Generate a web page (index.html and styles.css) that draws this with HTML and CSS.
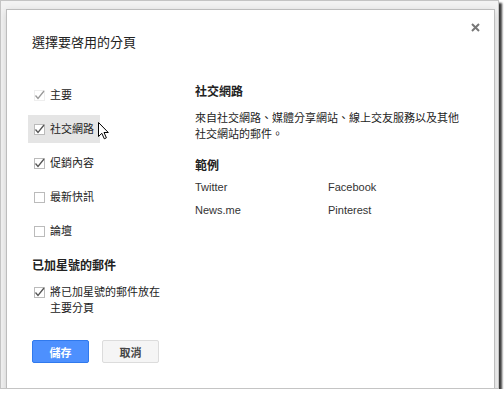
FILE: index.html
```html
<!DOCTYPE html>
<html lang="zh-Hant">
<head>
    <meta charset="UTF-8">
    <title>選擇要啓用的分頁</title>
    <link rel="stylesheet" href="styles.css">
</head>
<body>
    <div class="frame">
        <div class="dialog">
            <span class="close">
                <svg width="9" height="9" viewBox="0 0 9 9"><path d="M1 1 L8 8 M8 1 L1 8" stroke="#777" stroke-width="2"/></svg>
            </span>
            <h1 class="title">選擇要啓用的分頁</h1>

            <div class="body">
                <div class="tabs">
                    <div class="tab-list">
                        <label class="tab">
                            <svg class="cb" width="11" height="12" viewBox="0 0 11 12"><rect x="0.5" y="1.5" width="10" height="10" fill="#fff" stroke="#eee"/><path d="M1.5 6.5 L4 9.5 L10 2" fill="none" stroke="#999" stroke-width="1.3"/></svg>
                            主要
                        </label>
                        <label class="tab hover">
                            <svg class="cb" width="11" height="12" viewBox="0 0 11 12"><rect x="0.5" y="1.5" width="10" height="10" fill="#fff" stroke="#bbb"/><path d="M1.5 6.5 L4 9.5 L10 2" fill="none" stroke="#555" stroke-width="1.3"/></svg>
                            社交網路
                            <svg class="cursor" width="11" height="18" viewBox="0 0 11 18"><path d="M0.5 0.5 L0.5 14.5 L3.8 11.3 L6.3 16.8 L8.4 15.8 L6 10.5 L10.3 10.5 Z" fill="#fff" stroke="#000" stroke-width="1"/></svg>
                        </label>
                        <label class="tab">
                            <svg class="cb" width="11" height="12" viewBox="0 0 11 12"><rect x="0.5" y="1.5" width="10" height="10" fill="#fff" stroke="#bbb"/><path d="M1.5 6.5 L4 9.5 L10 2" fill="none" stroke="#555" stroke-width="1.3"/></svg>
                            促銷內容
                        </label>
                        <label class="tab">
                            <svg class="cb" width="11" height="12" viewBox="0 0 11 12"><rect x="0.5" y="1.5" width="10" height="10" fill="#fff" stroke="#bbb"/></svg>
                            最新快訊
                        </label>
                        <label class="tab">
                            <svg class="cb" width="11" height="12" viewBox="0 0 11 12"><rect x="0.5" y="1.5" width="10" height="10" fill="#fff" stroke="#bbb"/></svg>
                            論壇
                        </label>
                    </div>

                    <h2 class="sub">已加星號的郵件</h2>
                    <label class="tab starred">
                        <svg class="cb" width="11" height="12" viewBox="0 0 11 12"><rect x="0.5" y="1.5" width="10" height="10" fill="#fff" stroke="#bbb"/><path d="M1.5 6.5 L4 9.5 L10 2" fill="none" stroke="#555" stroke-width="1.3"/></svg>
                        <span class="starred-text">將已加星號的郵件放在主要分頁</span>
                    </label>

                    <div class="actions">
                        <button class="btn btn-primary">儲存</button>
                        <button class="btn btn-default">取消</button>
                    </div>
                </div>

                <div class="info">
                    <h2 class="sub">社交網路</h2>
                    <p class="desc">來自社交網路、媒體分享網站、線上交友服務以及其他社交網站的郵件。</p>
                    <h2 class="sub examples-title">範例</h2>
                    <div class="examples">
                        <span>Twitter</span>
                        <span>Facebook</span>
                        <span>News.me</span>
                        <span>Pinterest</span>
                    </div>
                </div>
            </div>
        </div>
    </div>
</body>
</html>
```

FILE: styles.css
```css
* {
    margin: 0;
    padding: 0;
    box-sizing: border-box;
}

body {
    background: #fff;
    font-family: "Liberation Sans", "Noto Sans CJK TC", sans-serif;
    font-size: 11px;
    color: #222;
}

.frame {
    width: 499px;
    height: 389px;
    border: 1px solid #c4c4c4;
    background: #f3f3f3;
    box-shadow: 3px 3px 2px #3c3c3c;
    overflow: hidden;
}

.dialog {
    position: relative;
    width: 489px;
    height: 420px;
    margin: 8px 0 0 5px;
    padding: 25px 0 0 25px;
    background: #fff;
    border: 1px solid #bdbdbd;
    box-shadow: 0 2px 8px rgba(0,0,0,0.15);
}

.close {
    position: absolute;
    top: 13px;
    right: 14px;
    line-height: 0;
}

.title {
    font-size: 13px;
    font-weight: normal;
    line-height: 16px;
    color: #222;
}

.body {
    display: flex;
    margin-top: 30px;
}

.tabs {
    width: 163px;
}

.tab {
    position: relative;
    display: flex;
    align-items: center;
    gap: 5px;
    width: fit-content;
    height: 28px;
    margin: 0 0 6px -4px;
    padding: 0 6px;
    line-height: 16px;
}

.tab.hover {
    background: #e5e5e5;
}

.cb {
    flex: none;
}

.cursor {
    position: absolute;
    left: 70px;
    top: 7px;
}

.sub {
    font-size: 12px;
    font-weight: bold;
    line-height: 16px;
    color: #222;
}

.tabs .sub {
    margin-top: 13px;
}

.tab.starred {
    align-items: flex-start;
    height: auto;
    margin: 10px 0 0 -4px;
}

.tab.starred .cb {
    margin-top: 2px;
}

.starred-text {
    width: 114px;
}

.actions {
    display: flex;
    gap: 13px;
    margin-top: 24px;
}

.btn {
    width: 57px;
    height: 23px;
    border-radius: 2px;
    font-family: "Liberation Sans", "Noto Sans CJK TC", sans-serif;
    font-size: 11px;
    font-weight: bold;
}

.btn-primary {
    background: #4d90fe;
    border: 1px solid #3079ed;
    color: #fff;
}

.btn-default {
    background: #f5f5f5;
    border: 1px solid #dcdcdc;
    color: #444;
}

.info {
    width: 270px;
    padding-top: 3px;
}

.desc {
    margin-top: 10px;
    line-height: 16px;
}

.examples-title {
    margin-top: 16px;
}

.examples {
    display: grid;
    grid-template-columns: 133px 133px;
    row-gap: 7px;
    margin-top: 5px;
    line-height: 16px;
    color: #333;
}
```
